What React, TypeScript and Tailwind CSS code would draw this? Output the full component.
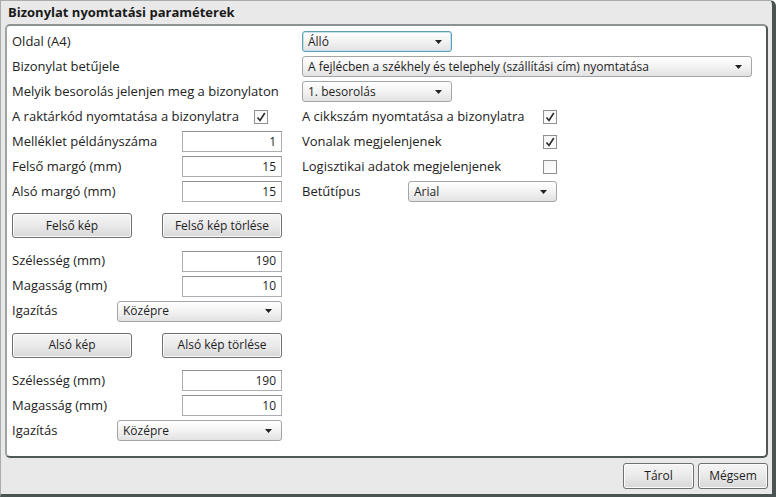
import React from 'react';

const font = { fontFamily: '"Open Sans", "Noto Sans", sans-serif' };

function Arrow() {
  return (
    <svg width="7" height="4" viewBox="0 0 7 4" className="shrink-0">
      <path d="M0 0 L7 0 L3.5 4 Z" fill="#222" />
    </svg>
  );
}

function Select({ text, className = '', focused = false }: { text: string; className?: string; focused?: boolean }) {
  return (
    <div
      className={`h-[21px] flex items-center justify-between pl-[5px] pr-[9px] rounded-[3px] border bg-gradient-to-b from-white via-[#f3f3f3] to-[#e2e2e2] text-[12px] text-[#1e1e1e] ${
        focused ? 'border-[#5f9fb5] shadow-[inset_0_0_0_1px_#c6e2ec]' : 'border-[#a3a6a8]'
      } ${className}`}
    >
      <span>{text}</span>
      <Arrow />
    </div>
  );
}

function Input({ value }: { value: string }) {
  return (
    <div className="w-[100px] h-[21px] flex items-center justify-end pr-[5px] border border-[#abadb3] border-t-[#8c8f94] bg-white text-[12px] text-[#1e1e1e]">
      {value}
    </div>
  );
}

function Check({ checked }: { checked: boolean }) {
  return (
    <div className="w-[14px] h-[14px] border border-[#8e8f8f] bg-gradient-to-br from-[#f4f4f4] to-white flex items-center justify-center">
      {checked && (
        <svg width="10" height="10" viewBox="0 0 10 10">
          <path d="M1.5 5.5 L4 8.5 L8.8 1" fill="none" stroke="#2b2b2b" strokeWidth="1.6" />
        </svg>
      )}
    </div>
  );
}

function Button({ label, className = '' }: { label: string; className?: string }) {
  return (
    <div
      className={`h-[25px] flex items-center justify-center rounded-[3px] border border-[#707070] bg-gradient-to-b from-[#f5f5f5] via-[#eaeaea] to-[#d7d7d7] shadow-[inset_0_0_0_1px_#fbfbfb] text-[12px] text-[#1e1e1e] ${className}`}
    >
      {label}
    </div>
  );
}

function Label({ children }: { children: React.ReactNode }) {
  return <span className="text-[13px] text-[#222]">{children}</span>;
}

function Row({ left, right }: { left: React.ReactNode; right?: React.ReactNode }) {
  return (
    <div className="h-[25px] flex items-center">
      <div className="w-[270px] flex items-center justify-between">{left}</div>
      <div className="ml-[20px] flex items-center">{right}</div>
    </div>
  );
}

function ImageBlock({ prefix }: { prefix: string }) {
  return (
    <>
      <div className="h-[44.5px] flex items-start pt-[9px]">
        <div className="w-[270px] flex justify-between">
          <Button label={`${prefix} kép`} className="w-[120px]" />
          <Button label={`${prefix} kép törlése`} className="w-[120px]" />
        </div>
      </div>
      <Row left={<><Label>Szélesség (mm)</Label><Input value="190" /></>} />
      <Row left={<><Label>Magasság (mm)</Label><Input value="10" /></>} />
      <Row left={<><Label>Igazítás</Label><Select text="Középre" className="w-[165px]" /></>} />
    </>
  );
}

export default function App() {
  return (
    <div
      style={font}
      className="w-[776px] h-[497px] bg-[#e9e9e9] border border-[#a9acac] border-r-[4px] border-b-[3px] border-r-[#4b5353] border-b-[#4b5353] rounded-tr-[6px] flex flex-col text-[12px] text-[#222]"
    >
      <div className="h-[23px] pl-[7px] flex items-center font-bold text-[13px] text-[#1a1a1a]">
        Bizonylat nyomtatási paraméterek
      </div>

      <div className="mx-[4px] h-[434px] bg-white rounded-[5px] border-2 border-[#4f5757] border-l-[#9ea3a3] border-t-[#8d9393] pt-[3px] pl-[5px]">
        <Row left={<Label>Oldal (A4)</Label>} right={<Select text="Álló" focused className="w-[150px]" />} />
        <Row left={<Label>Bizonylat betűjele</Label>} right={<Select text="A fejlécben a székhely és telephely (szállítási cím) nyomtatása" className="w-[450px]" />} />
        <Row left={<Label>Melyik besorolás jelenjen meg a bizonylaton</Label>} right={<Select text="1. besorolás" className="w-[150px]" />} />
        <Row
          left={<><Label>A raktárkód nyomtatása a bizonylatra</Label><div className="mr-[14px]"><Check checked /></div></>}
          right={<div className="w-[255px] flex items-center justify-between"><Label>A cikkszám nyomtatása a bizonylatra</Label><Check checked /></div>}
        />
        <Row
          left={<><Label>Melléklet példányszáma</Label><Input value="1" /></>}
          right={<div className="w-[255px] flex items-center justify-between"><Label>Vonalak megjelenjenek</Label><Check checked /></div>}
        />
        <Row
          left={<><Label>Felső margó (mm)</Label><Input value="15" /></>}
          right={<div className="w-[255px] flex items-center justify-between"><Label>Logisztikai adatok megjelenjenek</Label><Check checked={false} /></div>}
        />
        <Row
          left={<><Label>Alsó margó (mm)</Label><Input value="15" /></>}
          right={<div className="w-[255px] flex items-center justify-between"><Label>Betűtípus</Label><Select text="Arial" className="w-[149px]" /></div>}
        />
        <ImageBlock prefix="Felső" />
        <ImageBlock prefix="Alsó" />
      </div>

      <div className="flex-1 flex items-center justify-end gap-[4px] pr-[4px]">
        <Button label="Tárol" className="w-[71px] h-[26px]" />
        <Button label="Mégsem" className="w-[70px] h-[26px]" />
      </div>
    </div>
  );
}
